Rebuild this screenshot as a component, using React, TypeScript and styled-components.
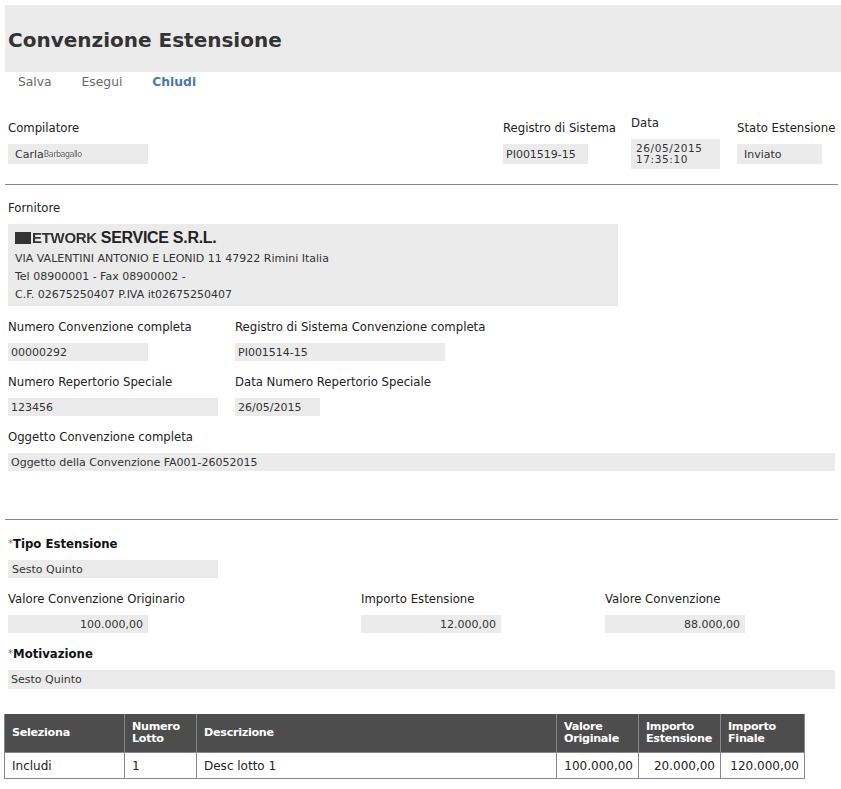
import React from "react";
import styled, { createGlobalStyle } from "styled-components";

const GlobalStyle = createGlobalStyle`
  body {
    margin: 0;
    background: #ffffff;
    font-family: "DejaVu Sans", Verdana, sans-serif;
    color: #222;
  }
`;

const Page = styled.div`
  width: 841px;
  padding-top: 5px;
`;

const Header = styled.div`
  margin-left: 5px;
  height: 67px;
  background: #ebebeb;
  display: flex;
  align-items: center;
`;

const Title = styled.h1`
  margin: 0 0 0 3px;
  padding-top: 2px;
  font-size: 20px;
  font-weight: bold;
  color: #333;
`;

const Toolbar = styled.div`
  display: flex;
  height: 20px;
  align-items: center;
  padding: 0 0 0 18px;
  gap: 30px;
`;

const ToolButton = styled.span<{ $active?: boolean }>`
  font-size: 12.3px;
  color: ${p => (p.$active ? "#4a78ac" : "#6a6a6a")};
  font-weight: ${p => (p.$active ? "bold" : "normal")};
`;

const Section = styled.div`
  padding: 0 6px 0 8px;
`;

const TopRow = styled.div`
  display: grid;
  grid-template-columns: 495px 128px 106px 1fr;
  align-items: center;
  height: 64px;
  margin-top: 18px;
`;

const Grid = styled.div<{ $cols: string }>`
  display: grid;
  grid-template-columns: ${p => p.$cols};
  margin-bottom: 13px;
`;

const Field = styled.div`
  display: flex;
  flex-direction: column;
  align-items: flex-start;
`;

const Label = styled.label`
  font-size: 11.7px;
  line-height: 16px;
  color: #222;
  margin-bottom: 8px;
  white-space: nowrap;
`;

const Required = styled.span`
  color: #777;
  font-weight: normal;
  font-size: 10px;
  vertical-align: top;
`;

const StrongLabel = styled(Label)`
  font-weight: bold;
  color: #111;
`;

const Value = styled.div<{
  $w: string;
  $h?: number;
  $pad?: number;
  $right?: boolean;
}>`
  width: ${p => p.$w};
  height: ${p => p.$h || 18}px;
  box-sizing: border-box;
  background: #ebebeb;
  font-size: 11px;
  color: #333;
  display: flex;
  align-items: center;
  justify-content: ${p => (p.$right ? "flex-end" : "flex-start")};
  padding: ${p => (p.$right ? "0 5px 0 0" : `0 0 0 ${p.$pad ?? 3}px`)};
  white-space: nowrap;
`;

const DateValue = styled(Value)`
  flex-direction: column;
  align-items: flex-start;
  justify-content: center;
  line-height: 11px;
  font-size: 10.5px;
  letter-spacing: 0.6px;
`;

const Scrambled = styled.span`
  font-size: 8px;
  color: #666;
  letter-spacing: -0.5px;
  filter: blur(0.3px);
`;

const Rule = styled.hr`
  margin: 0 -3px 0 -3px;
  border: none;
  border-top: 1px solid #888;
`;

const SupplierBox = styled.div`
  width: 610px;
  height: 82px;
  box-sizing: border-box;
  background: #ebebeb;
  padding: 4px 7px;
  font-size: 11px;
  color: #333;
  line-height: 18px;
`;

const SupplierName = styled.div`
  font-family: "Liberation Sans", Arial, sans-serif;
  font-size: 16px;
  font-weight: bold;
  line-height: 20px;
  color: #222;
  margin-bottom: 2px;
  display: flex;
  align-items: center;
  letter-spacing: -0.3px;
`;

const Redact = styled.span`
  display: inline-block;
  width: 16px;
  height: 12px;
  background: #333;
  margin-right: 1px;
`;

const RedactText = styled.span`
  color: #333;
  font-size: 15px;
  margin-right: 4px;
  filter: blur(0.4px);
`;

const Table = styled.table`
  margin: 25px 0 0 4px;
  border-collapse: collapse;
  table-layout: fixed;
  width: 800px;
  font-size: 12px;
`;

const Col = styled.col<{ $w: number }>`
  width: ${p => p.$w}px;
`;

const Th = styled.th`
  background: #4d4d4d;
  color: #fff;
  text-align: left;
  font-weight: bold;
  font-size: 11.2px;
  letter-spacing: -0.3px;
  line-height: 12px;
  padding: 0 0 0 7px;
  height: 38px;
  border: 1px solid #888;
  border-top: none;
  vertical-align: middle;
  white-space: nowrap;
`;

const Td = styled.td<{ $right?: boolean }>`
  border: 1px solid #888;
  height: 25px;
  padding: 0 5px 0 7px;
  color: #222;
  text-align: ${p => (p.$right ? "right" : "left")};
  white-space: nowrap;
`;

const Spacer = styled.div<{ $h: number }>`
  height: ${p => p.$h}px;
`;

export default function App() {
  return (
    <Page>
      <GlobalStyle />
      <Header>
        <Title>Convenzione Estensione</Title>
      </Header>
      <Toolbar>
        <ToolButton>Salva</ToolButton>
        <ToolButton>Esegui</ToolButton>
        <ToolButton $active>Chiudi</ToolButton>
      </Toolbar>

      <Section>
        <TopRow>
          <Field>
            <Label>Compilatore</Label>
            <Value $w="140px" $h={20} $pad={7}>
              Carla<Scrambled>Barbagallo</Scrambled>
            </Value>
          </Field>
          <Field>
            <Label>Registro di Sistema</Label>
            <Value $w="85px" $h={20} $pad={3}>
              PI001519-15
            </Value>
          </Field>
          <Field>
            <Label>Data</Label>
            <DateValue $w="89px" $h={30} $pad={5}>
              <span>26/05/2015</span>
              <span>17:35:10</span>
            </DateValue>
          </Field>
          <Field>
            <Label>Stato Estensione</Label>
            <Value $w="85px" $h={20} $pad={7}>
              Inviato
            </Value>
          </Field>
        </TopRow>
      </Section>

      <Spacer $h={10} />
      <Section>
        <Rule />
      </Section>
      <Spacer $h={15} />

      <Section>
        <Field>
          <Label>Fornitore</Label>
          <SupplierBox>
            <SupplierName>
              <Redact />
              <RedactText>ETWORK</RedactText>
              SERVICE S.R.L.
            </SupplierName>
            <div>VIA VALENTINI ANTONIO E LEONID 11 47922 Rimini Italia</div>
            <div>Tel 08900001 - Fax 08900002 -</div>
            <div>C.F. 02675250407 P.IVA it02675250407</div>
          </SupplierBox>
        </Field>
        <Spacer $h={13} />
        <Grid $cols="227px 1fr">
          <Field>
            <Label>Numero Convenzione completa</Label>
            <Value $w="140px">00000292</Value>
          </Field>
          <Field>
            <Label>Registro di Sistema Convenzione completa</Label>
            <Value $w="210px">PI001514-15</Value>
          </Field>
        </Grid>
        <Grid $cols="227px 1fr">
          <Field>
            <Label>Numero Repertorio Speciale</Label>
            <Value $w="210px">123456</Value>
          </Field>
          <Field>
            <Label>Data Numero Repertorio Speciale</Label>
            <Value $w="85px">26/05/2015</Value>
          </Field>
        </Grid>
        <Grid $cols="1fr">
          <Field>
            <Label>Oggetto Convenzione completa</Label>
            <Value $w="827px">Oggetto della Convenzione FA001-26052015</Value>
          </Field>
        </Grid>
      </Section>

      <Spacer $h={35} />
      <Section>
        <Rule />
      </Section>
      <Spacer $h={16} />

      <Section>
        <Grid $cols="1fr">
          <Field>
            <StrongLabel>
              <Required>*</Required>Tipo Estensione
            </StrongLabel>
            <Value $w="210px" $pad={4}>
              Sesto Quinto
            </Value>
          </Field>
        </Grid>
        <Grid $cols="353px 244px 1fr">
          <Field>
            <Label>Valore Convenzione Originario</Label>
            <Value $w="140px" $right>
              100.000,00
            </Value>
          </Field>
          <Field>
            <Label>Importo Estensione</Label>
            <Value $w="140px" $right>
              12.000,00
            </Value>
          </Field>
          <Field>
            <Label>Valore Convenzione</Label>
            <Value $w="140px" $right>
              88.000,00
            </Value>
          </Field>
        </Grid>
        <Grid $cols="1fr">
          <Field>
            <StrongLabel>
              <Required>*</Required>Motivazione
            </StrongLabel>
            <Value $w="827px" $h={19}>
              Sesto Quinto
            </Value>
          </Field>
        </Grid>
      </Section>

      <Table>
        <colgroup>
          <Col $w={120} />
          <Col $w={72} />
          <Col $w={360} />
          <Col $w={82} />
          <Col $w={82} />
          <Col $w={84} />
        </colgroup>
        <thead>
          <tr>
            <Th>Seleziona</Th>
            <Th>
              Numero
              <br />
              Lotto
            </Th>
            <Th>Descrizione</Th>
            <Th>
              Valore
              <br />
              Originale
            </Th>
            <Th>
              Importo
              <br />
              Estensione
            </Th>
            <Th>
              Importo
              <br />
              Finale
            </Th>
          </tr>
        </thead>
        <tbody>
          <tr>
            <Td>Includi</Td>
            <Td>1</Td>
            <Td>Desc lotto 1</Td>
            <Td $right>100.000,00</Td>
            <Td $right>20.000,00</Td>
            <Td $right>120.000,00</Td>
          </tr>
        </tbody>
      </Table>
    </Page>
  );
}
